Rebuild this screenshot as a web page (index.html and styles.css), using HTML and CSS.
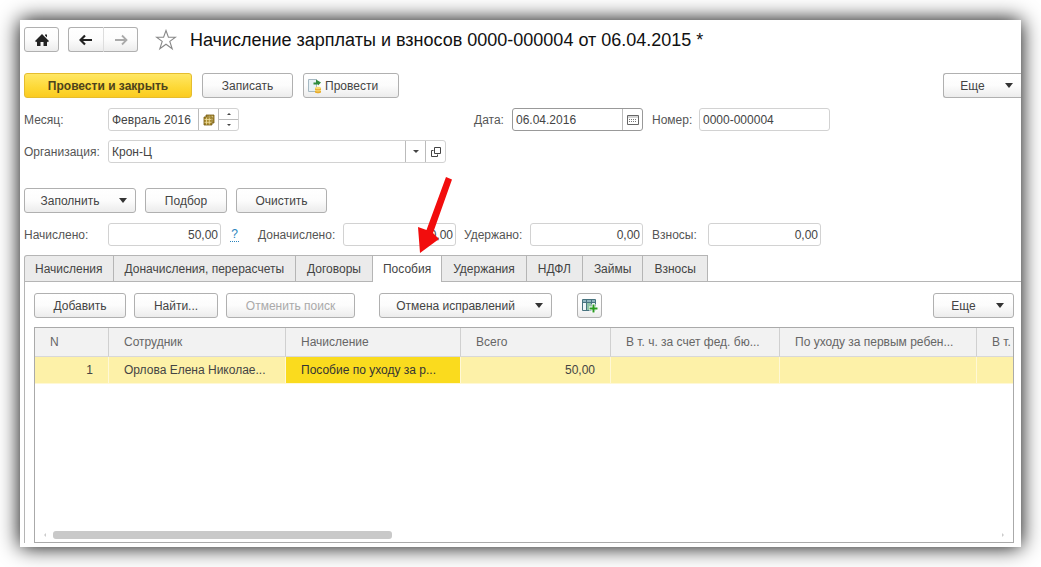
FILE: index.html
```html
<!DOCTYPE html>
<html lang="ru">
<head>
<meta charset="utf-8">
<title>Начисление зарплаты и взносов</title>
<link rel="stylesheet" href="styles.css">
</head>
<body>
<main class="window">
  <header class="titlebar">
    <button class="btn icon-btn" aria-label="Домой"><svg width="16" height="14" viewBox="0 0 16 14"><path d="M8 1 15 8 13.800 9.200 13 8.500V13H9.500V9H6.500V13H3V8.500L2.200 9.200 1 8ZM11 1.500h2v3l-2-2z" fill="#222"/></svg></button>
    <div class="nav">
      <button class="btn nav-btn" aria-label="Назад"><svg width="14" height="12" viewBox="0 0 14 12"><path d="M1.500 6H13M6 1.500 1.500 6 6 10.500" fill="none" stroke="#222" stroke-width="2.200"/></svg></button>
      <button class="btn nav-btn" aria-label="Вперед" disabled><svg width="14" height="12" viewBox="0 0 14 12"><path d="M1 6H12.500M8 1.500 12.500 6 8 10.500" fill="none" stroke="#aaa" stroke-width="1.800"/></svg></button>
    </div>
    <button class="star" aria-label="В избранное"><svg width="22" height="22" viewBox="0 0 22 22"><path d="M11 1.500 13.400 8.200H20.500L14.800 12.400 17.200 19.800 11 15.300 4.800 19.800 7.200 12.400 1.500 8.200H8.600Z" fill="#fff" stroke="#888" stroke-width="1.100"/></svg></button>
    <h1 class="title">Начисление зарплаты и взносов 0000-000004 от 06.04.2015 *</h1>
  </header>

  <div class="commands">
    <button class="btn primary">Провести и закрыть</button>
    <button class="btn save">Записать</button>
    <button class="btn post"><svg width="16" height="16" viewBox="0 0 16 16"><path d="M1.500 1.500h8v12h-8z" fill="#e8f1f5" stroke="#a5b8c2"/><path d="M6.500 6.500V4.500h2.500V1.500L14 4.500 11 7.500v-1z" fill="#2f8a3c"/><path d="M8 10v4.500c1 1 5 1 6 0V10z" fill="#e8ac2b"/><ellipse cx="11" cy="10" rx="3" ry="1.300" fill="#f8dc74"/><path d="M8 12.200c1 1 5 1 6 0" fill="none" stroke="#fae48d"/></svg>Провести</button>
    <button class="btn more cut">Еще<span class="caret"></span></button>
  </div>

  <div class="line">
    <label class="label first" for="month">Месяц:</label>
    <div class="field month">
      <input id="month" type="text" value="Февраль 2016">
      <button class="part" aria-label="Выбрать месяц"><svg width="12" height="12" viewBox="0 0 12 12"><path d="M3 1h8v8H9v2H1V3h2z" fill="#a98a2c"/><path d="M1 5.500h9M1 8.300h8M3.500 3v8M6.300 1.500V11M9 1.500V9M4 3h6.500" stroke="#f1e1a2" stroke-width=".8"/><path d="M3 3V1h8v8H9M1 3h8v8H1z" fill="none" stroke="#745c17" stroke-width=".8"/></svg></button>
      <div class="spin"><button aria-label="Больше"><span class="up"></span></button><button aria-label="Меньше"><span class="down"></span></button></div>
    </div>
    <label class="label date-label" for="date">Дата:</label>
    <div class="field date">
      <input id="date" type="text" value="06.04.2016">
      <button class="part" aria-label="Календарь"><svg width="12" height="10" viewBox="0 0 12 10"><path d="M.5.500h11v9H.5z" fill="#fff" stroke="#666"/><path d="M1 2h10" stroke="#aaa"/><path d="M2 4.500h8M2 6.500h8" stroke="#777" stroke-dasharray="1 1"/></svg></button>
    </div>
    <label class="label number-label" for="number">Номер:</label>
    <div class="field number"><input id="number" type="text" value="0000-000004"></div>
  </div>

  <div class="line">
    <label class="label first" for="org">Организация:</label>
    <div class="field org">
      <input id="org" type="text" value="Крон-Ц">
      <button class="part" aria-label="Список"><span class="down"></span></button>
      <button class="part" aria-label="Открыть"><svg width="10" height="10" viewBox="0 0 10 10"><path d="M3.500.500h6v6h-6z M2.500 3.500h-2v6h6v-2" fill="none" stroke="#444"/></svg></button>
    </div>
  </div>

  <div class="actions">
    <button class="btn fill">Заполнить<span class="caret"></span></button>
    <button class="btn pick">Подбор</button>
    <button class="btn clear">Очистить</button>
  </div>

  <div class="line totals">
    <label class="label first" for="t1">Начислено:</label>
    <div class="field sum"><input id="t1" type="text" value="50,00"></div>
    <a class="help" href="#">?</a>
    <label class="label second" for="t2">Доначислено:</label>
    <div class="field sum"><input id="t2" type="text" value="0,00"></div>
    <label class="label third" for="t3">Удержано:</label>
    <div class="field sum"><input id="t3" type="text" value="0,00"></div>
    <label class="label fourth" for="t4">Взносы:</label>
    <div class="field sum"><input id="t4" type="text" value="0,00"></div>
  </div>

  <nav class="tabs" role="tablist">
    <button class="tab" role="tab">Начисления</button>
    <button class="tab" role="tab">Доначисления, перерасчеты</button>
    <button class="tab" role="tab">Договоры</button>
    <button class="tab active" role="tab" aria-selected="true">Пособия</button>
    <button class="tab" role="tab">Удержания</button>
    <button class="tab" role="tab">НДФЛ</button>
    <button class="tab" role="tab">Займы</button>
    <button class="tab" role="tab">Взносы</button>
  </nav>

  <section class="panel">
    <div class="tools">
      <button class="btn add">Добавить</button>
      <button class="btn find">Найти...</button>
      <button class="btn reset" disabled>Отменить поиск</button>
      <button class="btn undo">Отмена исправлений<span class="caret"></span></button>
      <button class="btn columns" aria-label="Добавить колонку"><svg width="16" height="14" viewBox="0 0 16 14"><path d="M.5.500h13v11H.5z" fill="#edf5f7" stroke="#47737f"/><path d="M1 2h12" stroke="#8db3be" stroke-width="2"/><path d="M5 3h4v8H5z" fill="#8fc4a8"/><path d="M4.500 1v10M9.500 1v10M1 3.500h12" stroke="#47737f"/><path d="M11.500 5v9M7 9.500h9" stroke="#fff" stroke-width="4"/><path d="M11.500 5.500v8M7.500 9.500h8" stroke="#2a9b20" stroke-width="2"/></svg></button>
      <button class="btn more">Еще<span class="caret"></span></button>
    </div>
    <div class="grid">
      <table class="table">
        <colgroup><col class="c1"><col class="c2"><col class="c3"><col class="c4"><col class="c5"><col class="c6"><col class="c7"></colgroup>
        <thead><tr><th>N</th><th>Сотрудник</th><th>Начисление</th><th>Всего</th><th>В т. ч. за счет фед. бю...</th><th>По уходу за первым ребен...</th><th>В т.</th></tr></thead>
        <tbody><tr><td class="num">1</td><td>Орлова Елена Николае...</td><td class="current">Пособие по уходу за р...</td><td class="num">50,00</td><td></td><td></td><td></td></tr></tbody>
      </table>
      <div class="scroll"><span class="arrow-l"></span><div class="track"><div class="thumb"></div></div><span class="arrow-r"></span></div>
    </div>
  </section>

  <svg class="pointer" width="36" height="78" viewBox="0 0 36 78"><path d="M30 1 36 3.500 17 57 23 63 4 77 2 51 10.500 54Z" fill="#f20d0d"/></svg>
</main>
</body>
</html>
```
FILE: styles.css
```css
* { box-sizing: border-box; }
body {
  margin: 0;
  min-height: 100vh;
  padding: 20px;
  display: flex;
  background: #fff;
  color: #444;
  font: 12px/16px "Liberation Sans", Arial, sans-serif;
}
button, input { font: inherit; color: inherit; margin: 0; }
button { padding: 0; border: 0; background: none; }
.window {
  position: relative;
  flex: 1;
  min-width: 0;
  display: flex;
  flex-direction: column;
  padding: 7px 0 4px 4px;
  background: #fff;
  box-shadow: 0 0 20px #000;
}
.btn {
  display: flex;
  align-items: center;
  justify-content: center;
  flex: none;
  height: 25px;
  border: 1px solid #b0b0b0;
  border-radius: 3px;
  background: linear-gradient(#fff, #fcfcfc 50%, #ececec);
}
.btn:disabled { color: #aaa; }
.caret {
  border: 4px solid transparent;
  border-top: 5px solid #333;
  border-bottom: 0;
}
.titlebar { display: flex; align-items: center; height: 25px; }
.icon-btn { width: 35px; }
.nav { display: flex; margin: 0 17px 0 9px; }
.nav-btn { width: 35px; }
.nav-btn:first-child { border-right: 0; border-radius: 3px 0 0 3px; }
.nav-btn:last-child { border-radius: 0 3px 3px 0; border-left-color: #ddd; }
.star { display: flex; }
.title { margin: 0 0 0 13px; font-size: 18px; line-height: 24px; font-weight: 400; color: #111; white-space: nowrap; }
.commands { display: flex; gap: 10px; margin-top: 21px; }
.primary {
  width: 168px;
  border-color: #e5bd2f;
  background: linear-gradient(#ffe765, #fdd835 60%, #fbcb21);
  color: #4d431c;
  font-weight: 700;
}
.save { width: 91px; }
.post { width: 96px; justify-content: flex-start; gap: 2px; padding-left: 3px; }
.more { width: 81px; margin-left: auto; gap: 20px; padding-left: 8px; }
.cut { width: 78px; border-right: 0; border-radius: 3px 0 0 3px; }
.line { display: flex; align-items: center; margin-top: 9px; }
.commands + .line { margin-top: 10px; }
.label { flex: none; white-space: nowrap; color: #555; }
.first { width: 84px; }
.date-label { width: 38px; margin-left: 235px; }
.number-label { width: 47px; margin-left: 9px; }
.field {
  display: flex;
  flex: none;
  height: 23px;
  border: 1px solid #d2d2d2;
  border-radius: 3px;
  background: #fff;
  overflow: hidden;
}
.field input { flex: 1; min-width: 0; border: 0; outline: 0; padding: 0 3px; background: none; }
.month, .number { width: 131px; }
.date { width: 131px; border-color: #999; }
.org { width: 338px; }
.part {
  display: flex;
  align-items: center;
  justify-content: center;
  width: 20px;
  border-left: 1px solid #bbb;
}
.spin { display: flex; flex-direction: column; width: 20px; border-left: 1px solid #bbb; }
.spin button { flex: 1; display: flex; align-items: center; justify-content: center; }
.spin button + button { border-top: 1px solid #bbb; }
.up, .down { border: 2px solid transparent; }
.up { border-bottom: 2px solid #444; border-top: 0; }
.down { border-top: 2px solid #444; border-bottom: 0; }
.org .down { border-width: 3px 3px 0; }
.actions { display: flex; gap: 9px; margin-top: 25px; }
.fill { width: 112px; gap: 20px; padding-left: 8px; }
.pick { width: 82px; }
.clear { width: 91px; }
.totals { margin-top: 10px; }
.sum { width: 113px; }
.sum input { text-align: right; padding-right: 2px; }
.help { margin-left: 9px; width: 9px; line-height: 14px; text-align: center; color: #2a84bd; text-decoration: none; border-bottom: 1px dotted #2a84bd; }
.second { width: 85px; margin-left: 19px; }
.third { width: 66px; margin-left: 8px; }
.fourth { width: 56px; margin-left: 9px; }
.tabs { display: flex; margin-top: 9px; }
.tab {
  height: 26px;
  padding: 0 11px;
  border: 1px solid #b5b5b5;
  border-width: 1px 1px 0 0;
  background: #ebebeb;
  white-space: nowrap;
}
.tab:first-child { padding: 0 10px; border-left-width: 1px; border-top-left-radius: 3px; }
.tab.active { padding: 0 10px; background: #fff; height: 27px; margin-bottom: -1px; z-index: 1; }
.panel {
  flex: 1;
  display: flex;
  flex-direction: column;
  min-width: 0;
  padding: 11px 7px 0 9px;
  border: 1px solid #b5b5b5;
  border-width: 1px 0 0 1px;
}
.tools { display: flex; }
.add { width: 92px; }
.find { width: 84px; margin-left: 8px; }
.reset { width: 129px; margin-left: 8px; }
.undo { width: 173px; margin-left: 24px; gap: 20px; padding-left: 8px; }
.columns { width: 25px; margin-left: 25px; }
.grid {
  flex: 1;
  display: flex;
  flex-direction: column;
  min-width: 0;
  margin-top: 9px;
  border: 1px solid #aaa;
  overflow: hidden;
}
.table { width: 100%; min-width: 978px; table-layout: fixed; border-collapse: separate; border-spacing: 0; }
.c1 { width: 74px; }
.c2 { width: 177px; }
.c3 { width: 175px; }
.c4 { width: 150px; }
.c5 { width: 169px; }
.c6 { width: 197px; }
.table th, .table td { padding: 0 15px; text-align: left; font-weight: 400; white-space: nowrap; }
.table th { height: 29px; background: #f2f2f2; color: #666; border-right: 1px solid #d0d0d0; border-bottom: 1px solid #d8d8d8; }
.table td { height: 27px; background: #fdf1a8; border-right: 1px solid #fff8d5; border-bottom: 1px solid #fff8d5; }
.table td.num { text-align: right; }
.table td.current { background: #fadb1e; color: #333; }
.table th:last-child, .table td:last-child { padding-right: 0; border-right: 0; }
.scroll { display: flex; align-items: center; margin-top: auto; padding: 0 9px 3px; gap: 7px; }
.track { flex: 1; }
.thumb { width: 36%; height: 8px; border-radius: 3px; background: #c9c9c9; }
.arrow-l, .arrow-r { border: 2px solid transparent; }
.arrow-l { border-right-color: #ccc; border-left: 0; }
.arrow-r { border-left-color: #ccc; border-right: 0; }
.pointer { position: absolute; left: 396px; top: 156px; }
```
